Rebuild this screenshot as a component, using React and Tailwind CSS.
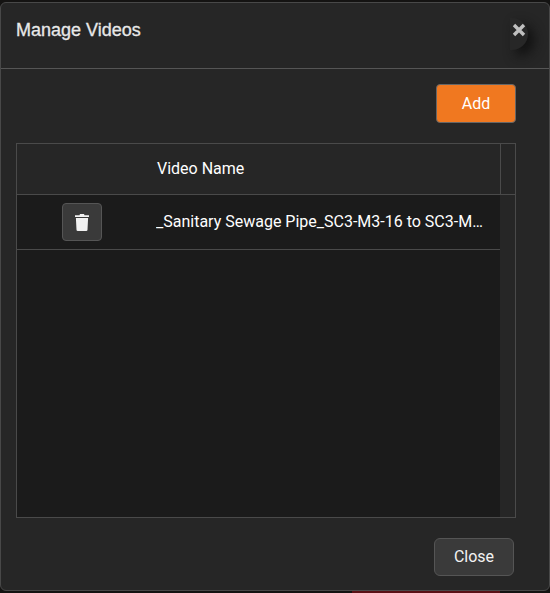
const TrashIcon = () => (
  <svg width="14" height="17" viewBox="0 0 14 17" fill="#f2f2f2">
    <path d="M5 0h4l.5 1.200H14v1.800H0V1.200h4.500z" />
    <path d="M.9 4h12.200l-.6 11.700A1.300 1.300 0 0 1 11.200 17H2.800a1.300 1.300 0 0 1-1.300-1.300z" />
  </svg>
);

const App = () => {
  return (
    <div className="w-[550px] h-[593px] bg-[#141312] pt-[2px] overflow-hidden font-['Roboto',sans-serif]">
      <div className="h-[589px] flex flex-col bg-[#262626] border border-[#484848] rounded-md">
        <header className="h-[66px] shrink-0 flex justify-between border-b border-[#555] pl-[15px] pr-[21px] pt-[15px]">
          <h2 className="text-[18px] leading-[24px] text-[#e8e8e8] font-['Liberation_Sans',sans-serif] [-webkit-text-stroke:0.3px_#e8e8e8]">
            Manage Videos
          </h2>
          <button className="w-[18px] h-[32px] rounded-r-full bg-[#272727] shadow-[6px_6px_12px_#111] flex justify-center pt-[5px] text-[#c0c0c0]">
            <svg width="14" height="14" viewBox="0 0 14 14" stroke="currentColor" strokeWidth="3.400">
              <path d="M2 2l10 10M12 2L2 12" />
            </svg>
          </button>
        </header>
        <div className="flex-1 flex flex-col pl-[15px] pr-[33px] min-h-0">
          <div className="flex justify-end pt-[15px] pb-[20px]">
            <button className="w-[80px] h-[39px] bg-[#f07820] border border-[#666] rounded text-white text-[16px]">
              Add
            </button>
          </div>
          <div className="h-[375px] flex flex-col border border-[#4a4a4a] bg-[#1b1b1b]">
            <div className="h-[51px] shrink-0 flex bg-[#262626] border-b border-[#4a4a4a]">
              <div className="w-[140px] shrink-0" />
              <div className="flex-1 pt-[15px] text-[16px] leading-[20px] text-white">
                Video Name
              </div>
              <div className="w-[15px] shrink-0 border-l border-[#4a4a4a]" />
            </div>
            <div className="flex-1 flex min-h-0">
              <div className="flex-1 min-w-0">
                <div className="h-[55px] flex items-center border-b border-[#4a4a4a]">
                  <div className="w-[139px] shrink-0 flex justify-center pr-[10px]">
                    <button className="w-[40px] h-[38px] flex items-center justify-center bg-[#3a3a3a] border border-[#555] rounded">
                      <TrashIcon />
                    </button>
                  </div>
                  <div className="flex-1 min-w-0 pr-[16px] truncate text-[16px] text-white">
                    _Sanitary Sewage Pipe_SC3-M3-16 to SC3-M3-17
                  </div>
                </div>
              </div>
              <div className="w-[15px] shrink-0 bg-[#262626]" />
            </div>
          </div>
          <div className="flex justify-end pt-[20px] pr-[2px]">
            <button className="w-[80px] h-[38px] bg-[#3a3a3a] border border-[#555] rounded-md text-[#f2f2f2] text-[16px]">
              Close
            </button>
          </div>
        </div>
      </div>
      <div className="h-[2px] flex pl-[352px]">
        <div className="w-[148px] bg-[#5a1015]" />
      </div>
    </div>
  );
};

export default App;
